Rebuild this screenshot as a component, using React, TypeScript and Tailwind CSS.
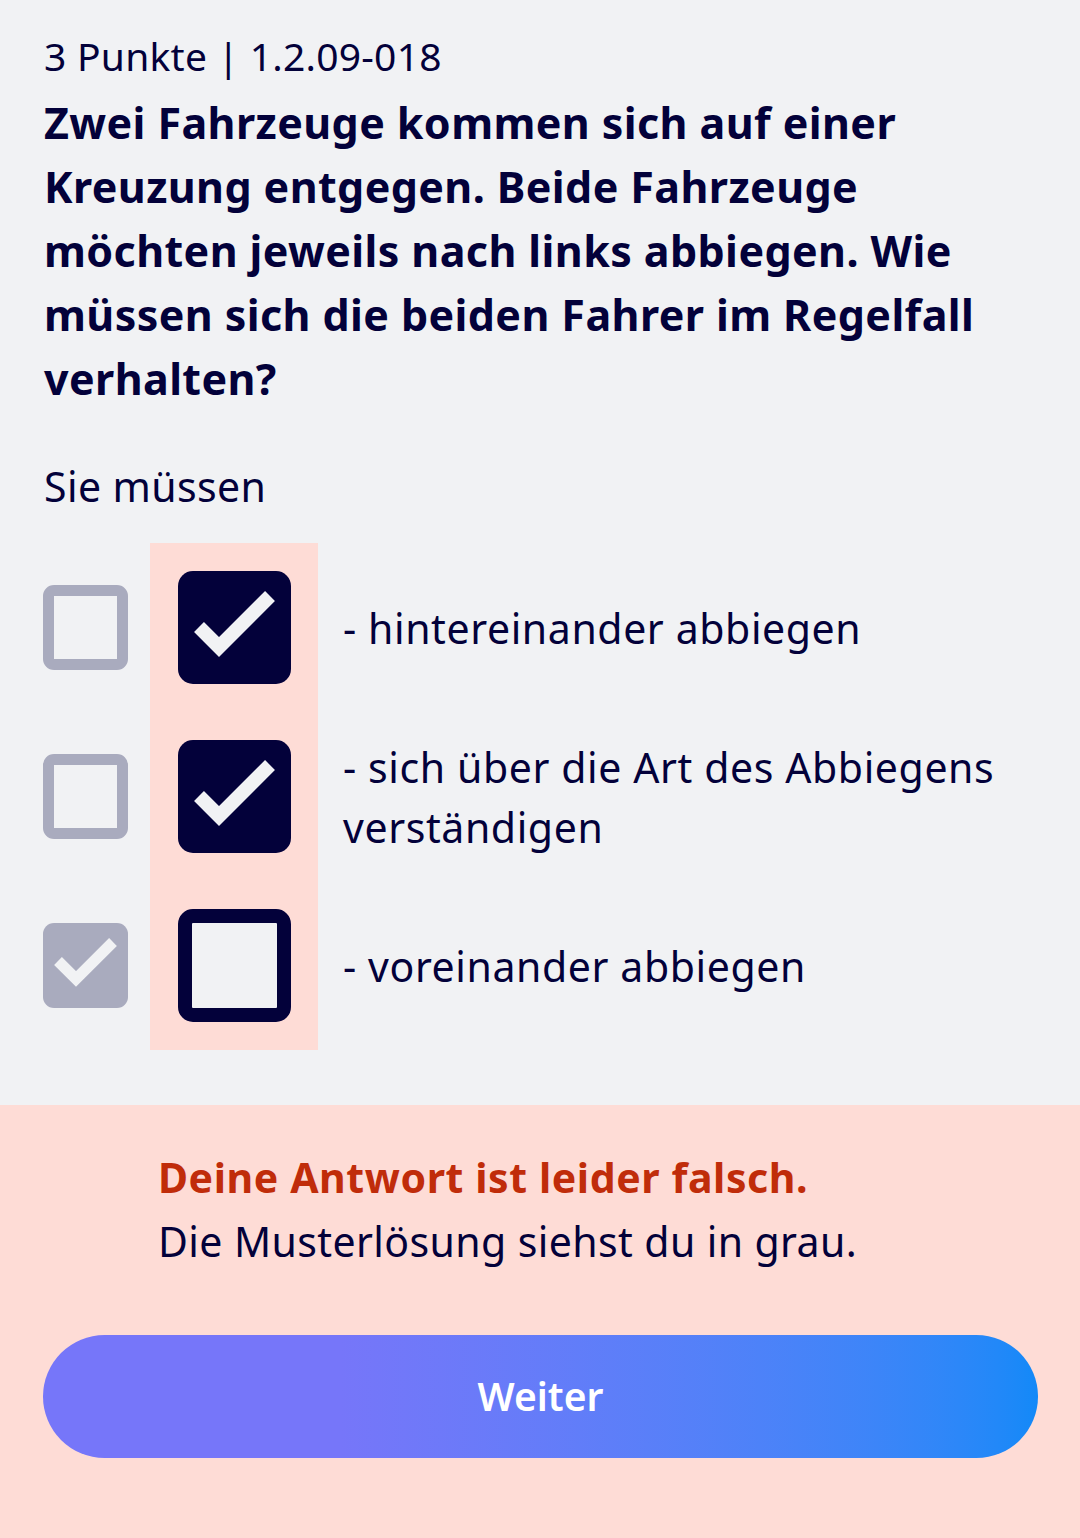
import React from "react";

const ink = "text-[#03013a]";

function GrayBox({ checked }: { checked?: boolean }) {
  if (checked) {
    return (
      <div className="w-[85px] h-[85px] rounded-[11px] bg-[#a9abbe] shrink-0">
        <svg viewBox="0 0 85 85" className="w-full h-full">
          <polyline points="15,38 33,56 70,19" fill="none" stroke="#f1f2f4" strokeWidth="11" strokeLinejoin="miter" />
        </svg>
      </div>
    );
  }
  return <div className="w-[85px] h-[85px] rounded-[11px] border-[11px] border-[#a9abbe] bg-[#f1f2f4] shrink-0" />;
}

function DarkBox({ checked }: { checked?: boolean }) {
  if (checked) {
    return (
      <div className="w-[113px] h-[113px] rounded-[15px] bg-[#03013a] shrink-0">
        <svg viewBox="0 0 113 113" className="w-full h-full">
          <polyline points="21,56 41,76 92,25" fill="none" stroke="#f1f2f4" strokeWidth="14" strokeLinejoin="miter" />
        </svg>
      </div>
    );
  }
  return <div className="w-[113px] h-[113px] rounded-[15px] border-[14px] border-[#03013a] bg-[#f1f2f4] shrink-0" />;
}

const answers = [
  { solution: false, mine: true, text: <>- hintereinander abbiegen</> },
  { solution: false, mine: true, text: <>- sich über die Art des Abbiegens<br />verständigen</> },
  { solution: true, mine: false, text: <>- voreinander abbiegen</> },
];

export default function App() {
  return (
    <div
      className={`w-[1080px] h-[1538px] bg-[#f1f2f4] flex flex-col ${ink}`}
      style={{ fontFamily: '"Noto Sans", "Open Sans", sans-serif' }}
    >
      <div className="px-[44px] pt-[30px]">
        <p className="text-[39px] leading-[52px] tracking-[0.25px]">3 Punkte | 1.2.09-018</p>
        <h1 className="mt-[9px] text-[43px] leading-[64px] font-bold tracking-[0.4px]">
          Zwei Fahrzeuge kommen sich auf einer<br />
          Kreuzung entgegen. Beide Fahrzeuge<br />
          möchten jeweils nach links abbiegen. Wie<br />
          müssen sich die beiden Fahrer im Regelfall<br />
          verhalten?
        </h1>
        <p className="mt-[45px] text-[41px] leading-[60px] tracking-[0.4px]">Sie müssen</p>
      </div>

      <div className="mt-[27px] flex flex-col">
        {answers.map((a, i) => (
          <div key={i} className="flex h-[169px] items-stretch pl-[43px]">
            <div className="flex items-center">
              <GrayBox checked={a.solution} />
            </div>
            <div className="ml-[22px] w-[168px] bg-[#fedcd6] flex items-center pl-[28px]">
              <DarkBox checked={a.mine} />
            </div>
            <div className="ml-[25px] flex items-center text-[41px] leading-[60px] tracking-[0.6px]">
              <p>{a.text}</p>
            </div>
          </div>
        ))}
      </div>

      <div className="mt-[55px] flex-1 bg-[#fedcd6] flex flex-col px-[43px]">
        <div className="pl-[115px] pt-[40px]">
          <p className="text-[41px] leading-[64px] font-bold text-[#c02c0a] tracking-[0.6px]">Deine Antwort ist leider falsch.</p>
          <p className="text-[41px] leading-[64px] tracking-[0.4px]">Die Musterlösung siehst du in grau.</p>
        </div>
        <button className="mt-[62px] w-[995px] h-[123px] rounded-full bg-linear-to-r from-[#7676f9] from-30% to-[#1289f8] text-white text-[39px] font-semibold">
          Weiter
        </button>
      </div>
    </div>
  );
}
